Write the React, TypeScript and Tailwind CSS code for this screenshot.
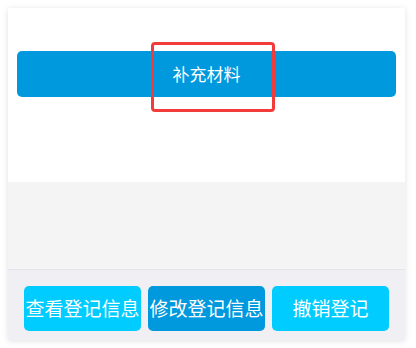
import React from "react";

const actions = [
  { label: "查看登记信息", active: false },
  { label: "修改登记信息", active: true },
  { label: "撤销登记", active: false },
];

export default function App() {
  return (
    <div
      className="relative h-[348px] w-[416px] overflow-hidden bg-white pl-2 pt-2"
      style={{ fontFamily: '"Noto Sans CJK SC", "Noto Sans", sans-serif' }}
    >
      <div className="flex w-[397px] flex-col shadow-[0_1px_6px_rgba(0,0,0,0.12)]">
        <div className="h-[174px] bg-white px-[9px] pt-[43px]">
          <button className="flex h-[46px] w-full items-center justify-center rounded-[5px] bg-[#0099dd] text-[17px] text-white">
            补充材料
          </button>
        </div>

        <div className="h-[87px] bg-[#f4f4f4]" />

        <div className="flex h-[71px] justify-between border-t border-[#e4e4ea] bg-[#efeff4] px-4 pt-4">
          {actions.map((a) => (
            <button
              key={a.label}
              className={
                a.active
                  ? "flex h-[45px] w-[117px] items-center justify-center whitespace-nowrap rounded-[5px] bg-[#0099dd] text-[19px] text-white"
                  : "flex h-[45px] w-[117px] items-center justify-center whitespace-nowrap rounded-[5px] bg-[#00ccff] text-[19px] text-white"
              }
            >
              {a.label}
            </button>
          ))}
        </div>
      </div>

      {/* annotation box */}
      <div className="absolute left-[151px] top-[42px] h-[70px] w-[124px] rounded-[4px] border-[3px] border-[#f23c3c]" />
    </div>
  );
}
